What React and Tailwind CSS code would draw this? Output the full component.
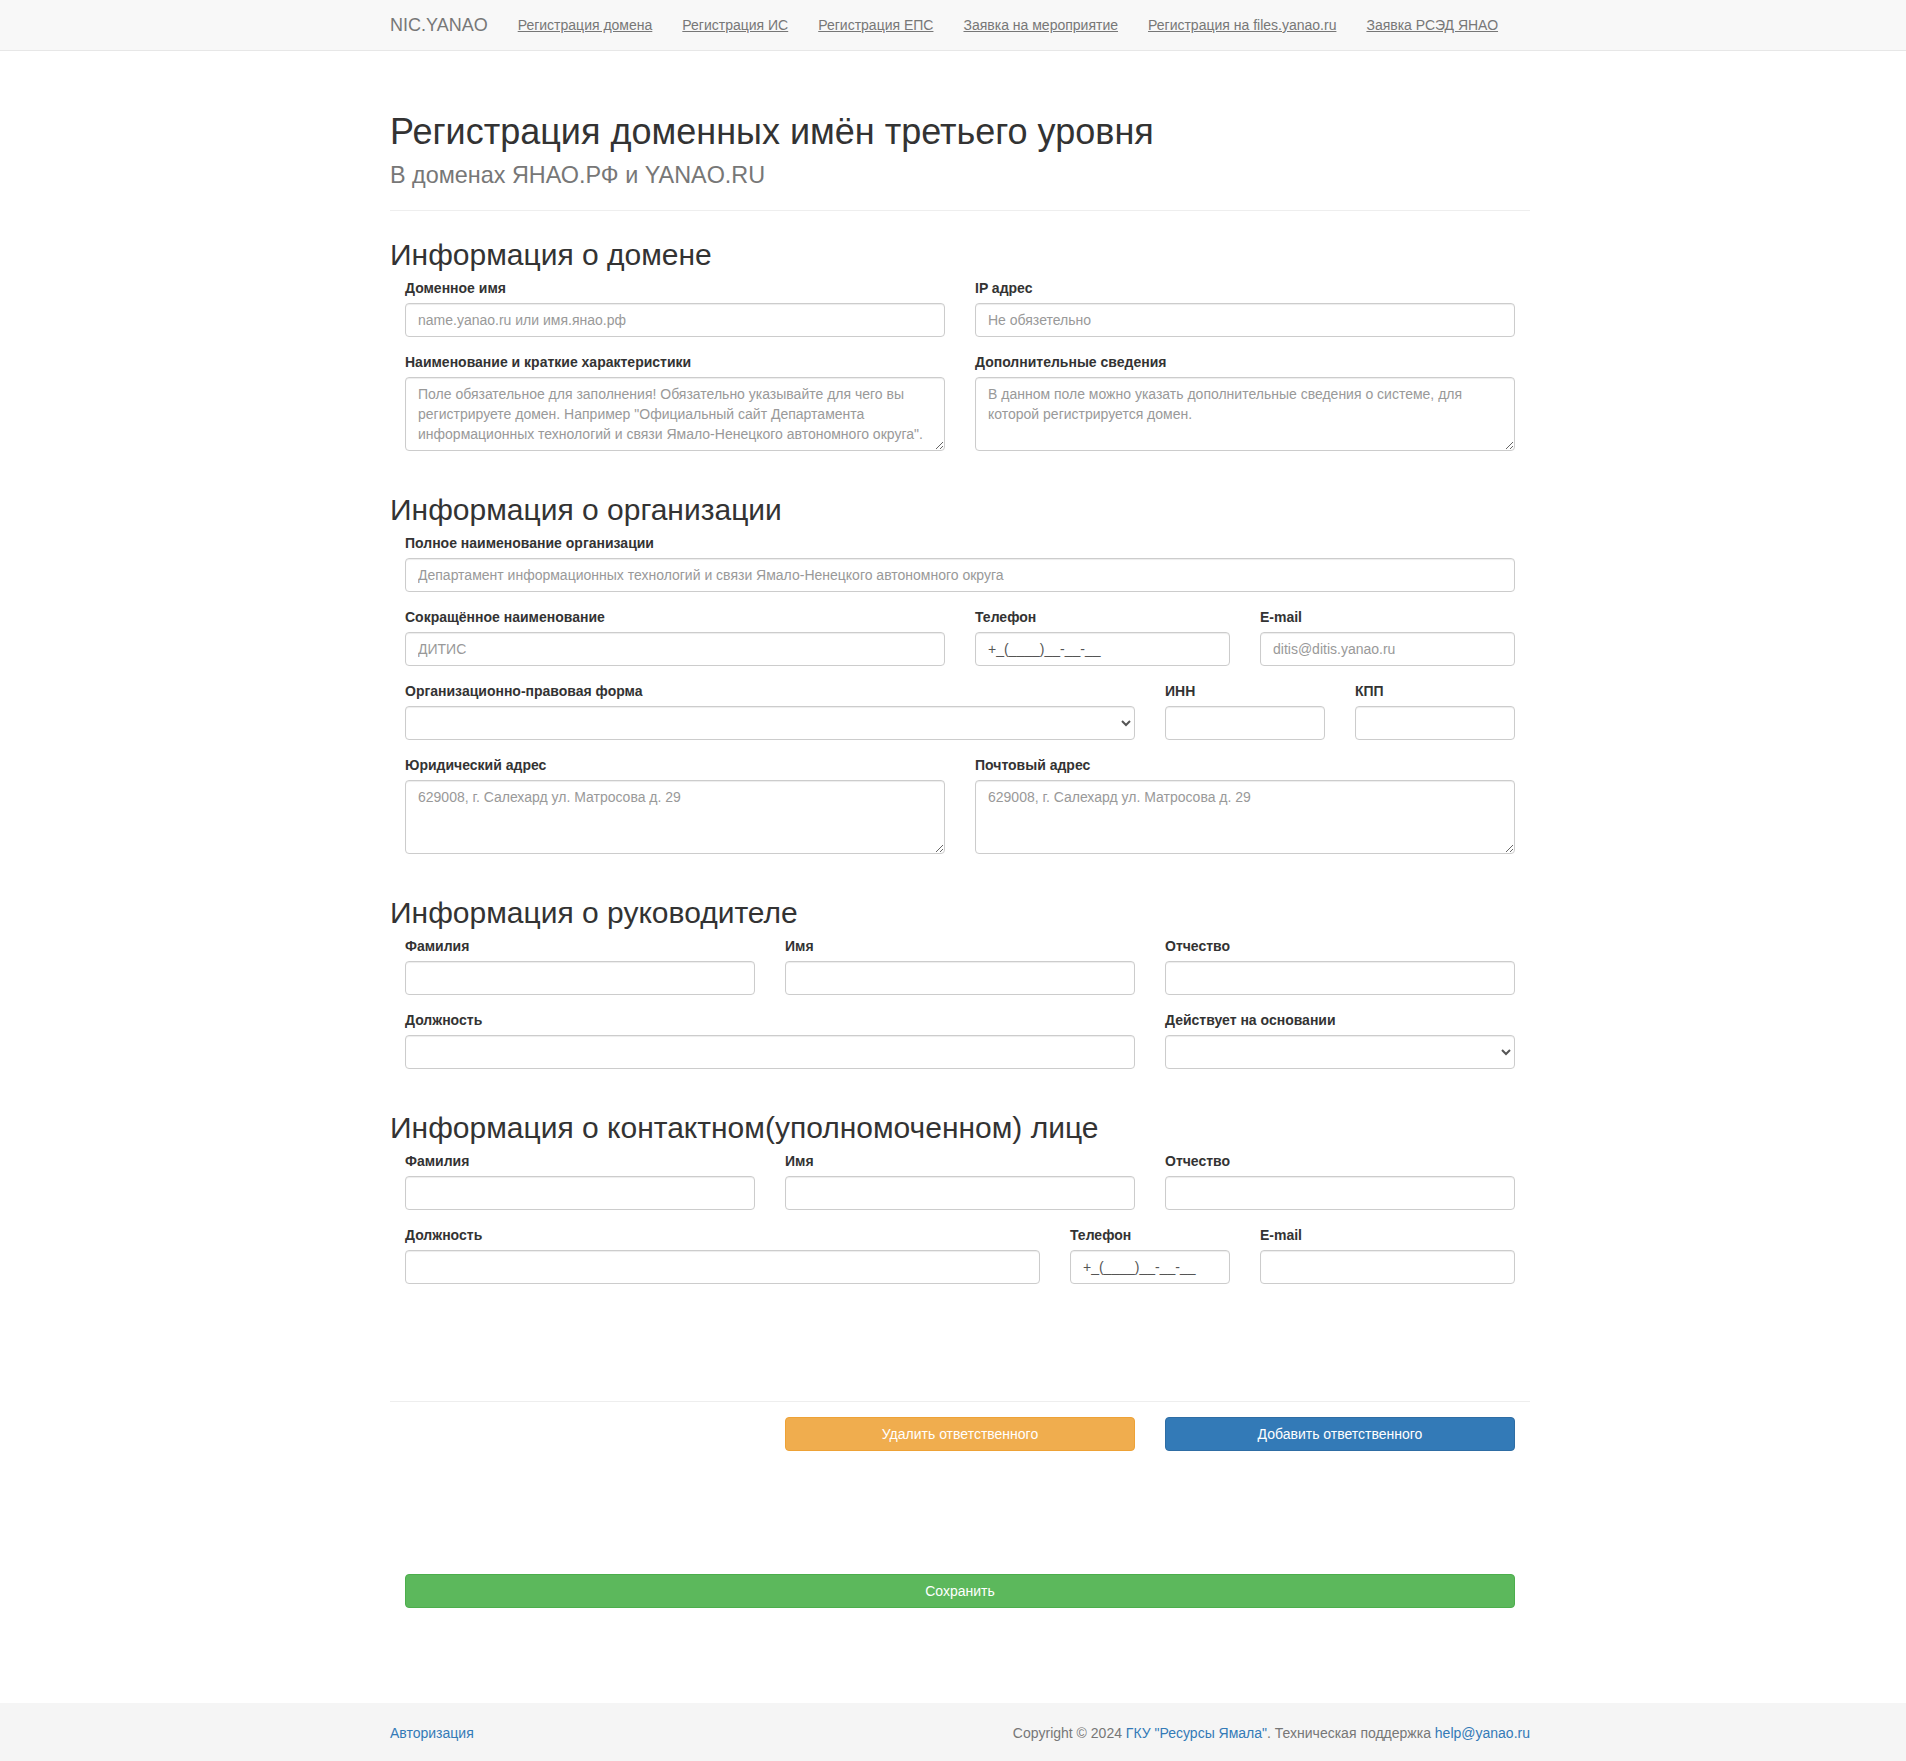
import React from 'react';

const inputBase =
  'block w-full h-[34px] rounded-[4px] border border-[#ccc] bg-white px-[12px] py-[6px] text-[14px] leading-[20px] text-[#555] shadow-[inset_0_1px_1px_rgba(0,0,0,0.075)] placeholder:text-[#999] outline-none';

const navLinks = [
  'Регистрация домена',
  'Регистрация ИС',
  'Регистрация ЕПС',
  'Заявка на мероприятие',
  'Регистрация на files.yanao.ru',
  'Заявка РСЭД ЯНАО',
];

function Field({ label, span, kind = 'input', placeholder, value }) {
  let control;

  if (kind === 'textarea') {
    control = (
      <textarea
        rows={3}
        placeholder={placeholder}
        className="block w-full h-[74px] rounded-[4px] border border-[#ccc] bg-white px-[12px] py-[6px] text-[14px] leading-[20px] text-[#555] shadow-[inset_0_1px_1px_rgba(0,0,0,0.075)] placeholder:text-[#999] outline-none resize-y"
      />
    );
  } else if (kind === 'select') {
    control = (
      <select className={`${inputBase} py-0`} defaultValue="">
        <option value=""></option>
      </select>
    );
  } else {
    control = (
      <input
        type="text"
        placeholder={placeholder}
        defaultValue={value}
        className={inputBase}
      />
    );
  }

  return (
    <div className={`${span} px-[15px] mb-[15px]`}>
      <label className="block mb-[5px] text-[14px] leading-[20px] font-bold text-[#333]">
        {label}
      </label>
      {control}
    </div>
  );
}

function Section({ title, children }) {
  return (
    <div>
      <h2 className="mt-[27px] mb-[7px] text-[30px] leading-[33px] font-normal text-[#333]">
        {title}
      </h2>
      {children}
    </div>
  );
}

function Row({ children }) {
  return <div className="grid grid-cols-12">{children}</div>;
}

export default function App() {
  const phone = '+_(____)__-__-__';

  return (
    <div className="min-h-[1761px] flex flex-col bg-white font-['Liberation_Sans',Arial,sans-serif] text-[14px] text-[#333]">
      <nav className="h-[51px] bg-[#f8f8f8] border-b border-[#e7e7e7]">
        <div className="mx-auto w-[1154px] pl-[14px] h-full flex items-center">
          <span className="text-[18px] leading-[20px] text-[#777] pr-[15px]">NIC.YANAO</span>
          {navLinks.map((link) => (
            <a
              key={link}
              href="#"
              className="px-[15px] text-[14px] leading-[20px] text-[#777] underline"
            >
              {link}
            </a>
          ))}
        </div>
      </nav>

      <main className="mx-auto w-[1154px] pl-[14px] flex-1">
        <div className="pb-[21px] border-b border-[#eee]">
          <h1 className="mt-[61px] text-[36px] leading-[40px] font-normal text-[#333]">
            Регистрация доменных имён третьего уровня
          </h1>
          <div className="mt-[9px] text-[23.4px] leading-[28px] text-[#777]">
            В доменах ЯНАО.РФ и YANAO.RU
          </div>
        </div>

        <Section title="Информация о домене">
          <Row>
            <Field span="col-span-6" label="Доменное имя" placeholder="name.yanao.ru или имя.янао.рф" />
            <Field span="col-span-6" label="IP адрес" placeholder="Не обязетельно" />
          </Row>
          <Row>
            <Field
              span="col-span-6"
              kind="textarea"
              label="Наименование и краткие характеристики"
              placeholder={'Поле обязательное для заполнения! Обязательно указывайте для чего вы регистрируете домен. Например "Официальный сайт Департамента информационных технологий и связи Ямало-Ненецкого автономного округа".'}
            />
            <Field
              span="col-span-6"
              kind="textarea"
              label="Дополнительные сведения"
              placeholder="В данном поле можно указать дополнительные сведения о системе, для которой регистрируется домен."
            />
          </Row>
        </Section>

        <Section title="Информация о организации">
          <Row>
            <Field
              span="col-span-12"
              label="Полное наименование организации"
              placeholder="Департамент информационных технологий и связи Ямало-Ненецкого автономного округа"
            />
          </Row>
          <Row>
            <Field span="col-span-6" label="Сокращённое наименование" placeholder="ДИТИС" />
            <Field span="col-span-3" label="Телефон" value={phone} />
            <Field span="col-span-3" label="E-mail" placeholder="ditis@ditis.yanao.ru" />
          </Row>
          <Row>
            <Field span="col-span-8" kind="select" label="Организационно-правовая форма" />
            <Field span="col-span-2" label="ИНН" />
            <Field span="col-span-2" label="КПП" />
          </Row>
          <Row>
            <Field
              span="col-span-6"
              kind="textarea"
              label="Юридический адрес"
              placeholder="629008, г. Салехард ул. Матросова д. 29"
            />
            <Field
              span="col-span-6"
              kind="textarea"
              label="Почтовый адрес"
              placeholder="629008, г. Салехард ул. Матросова д. 29"
            />
          </Row>
        </Section>

        <Section title="Информация о руководителе">
          <Row>
            <Field span="col-span-4" label="Фамилия" />
            <Field span="col-span-4" label="Имя" />
            <Field span="col-span-4" label="Отчество" />
          </Row>
          <Row>
            <Field span="col-span-8" label="Должность" />
            <Field span="col-span-4" kind="select" label="Действует на основании" />
          </Row>
        </Section>

        <Section title="Информация о контактном(уполномоченном) лице">
          <Row>
            <Field span="col-span-4" label="Фамилия" />
            <Field span="col-span-4" label="Имя" />
            <Field span="col-span-4" label="Отчество" />
          </Row>
          <Row>
            <Field span="col-span-7" label="Должность" />
            <Field span="col-span-2" label="Телефон" value={phone} />
            <Field span="col-span-3" label="E-mail" />
          </Row>
        </Section>

        <div className="mt-[102px] border-t border-[#eee] pt-[15px]">
          <Row>
            <div className="col-span-4 col-start-5 px-[15px]">
              <button
                type="button"
                className="w-full h-[34px] rounded-[4px] border border-[#eea236] bg-[#f0ad4e] text-[14px] leading-[20px] text-white"
              >
                Удалить ответственного
              </button>
            </div>
            <div className="col-span-4 px-[15px]">
              <button
                type="button"
                className="w-full h-[34px] rounded-[4px] border border-[#2e6da4] bg-[#337ab7] text-[14px] leading-[20px] text-white"
              >
                Добавить ответственного
              </button>
            </div>
          </Row>
        </div>

        <div className="mt-[123px] px-[15px]">
          <button
            type="button"
            className="w-full h-[34px] rounded-[4px] border border-[#4cae4c] bg-[#5cb85c] text-[14px] leading-[20px] text-white"
          >
            Сохранить
          </button>
        </div>
      </main>

      <footer className="mt-[95px] h-[59px] bg-[#f5f5f5]">
        <div className="mx-auto w-[1154px] pl-[14px] h-full flex items-center justify-between text-[14px] leading-[20px]">
          <a href="#" className="text-[#337ab7]">Авторизация</a>
          <span className="text-[#777]">
            Copyright © 2024 <a href="#" className="text-[#337ab7]">ГКУ "Ресурсы Ямала"</a>. Техническая поддержка{' '}
            <a href="#" className="text-[#337ab7]">help@yanao.ru</a>
          </span>
        </div>
      </footer>
    </div>
  );
}
